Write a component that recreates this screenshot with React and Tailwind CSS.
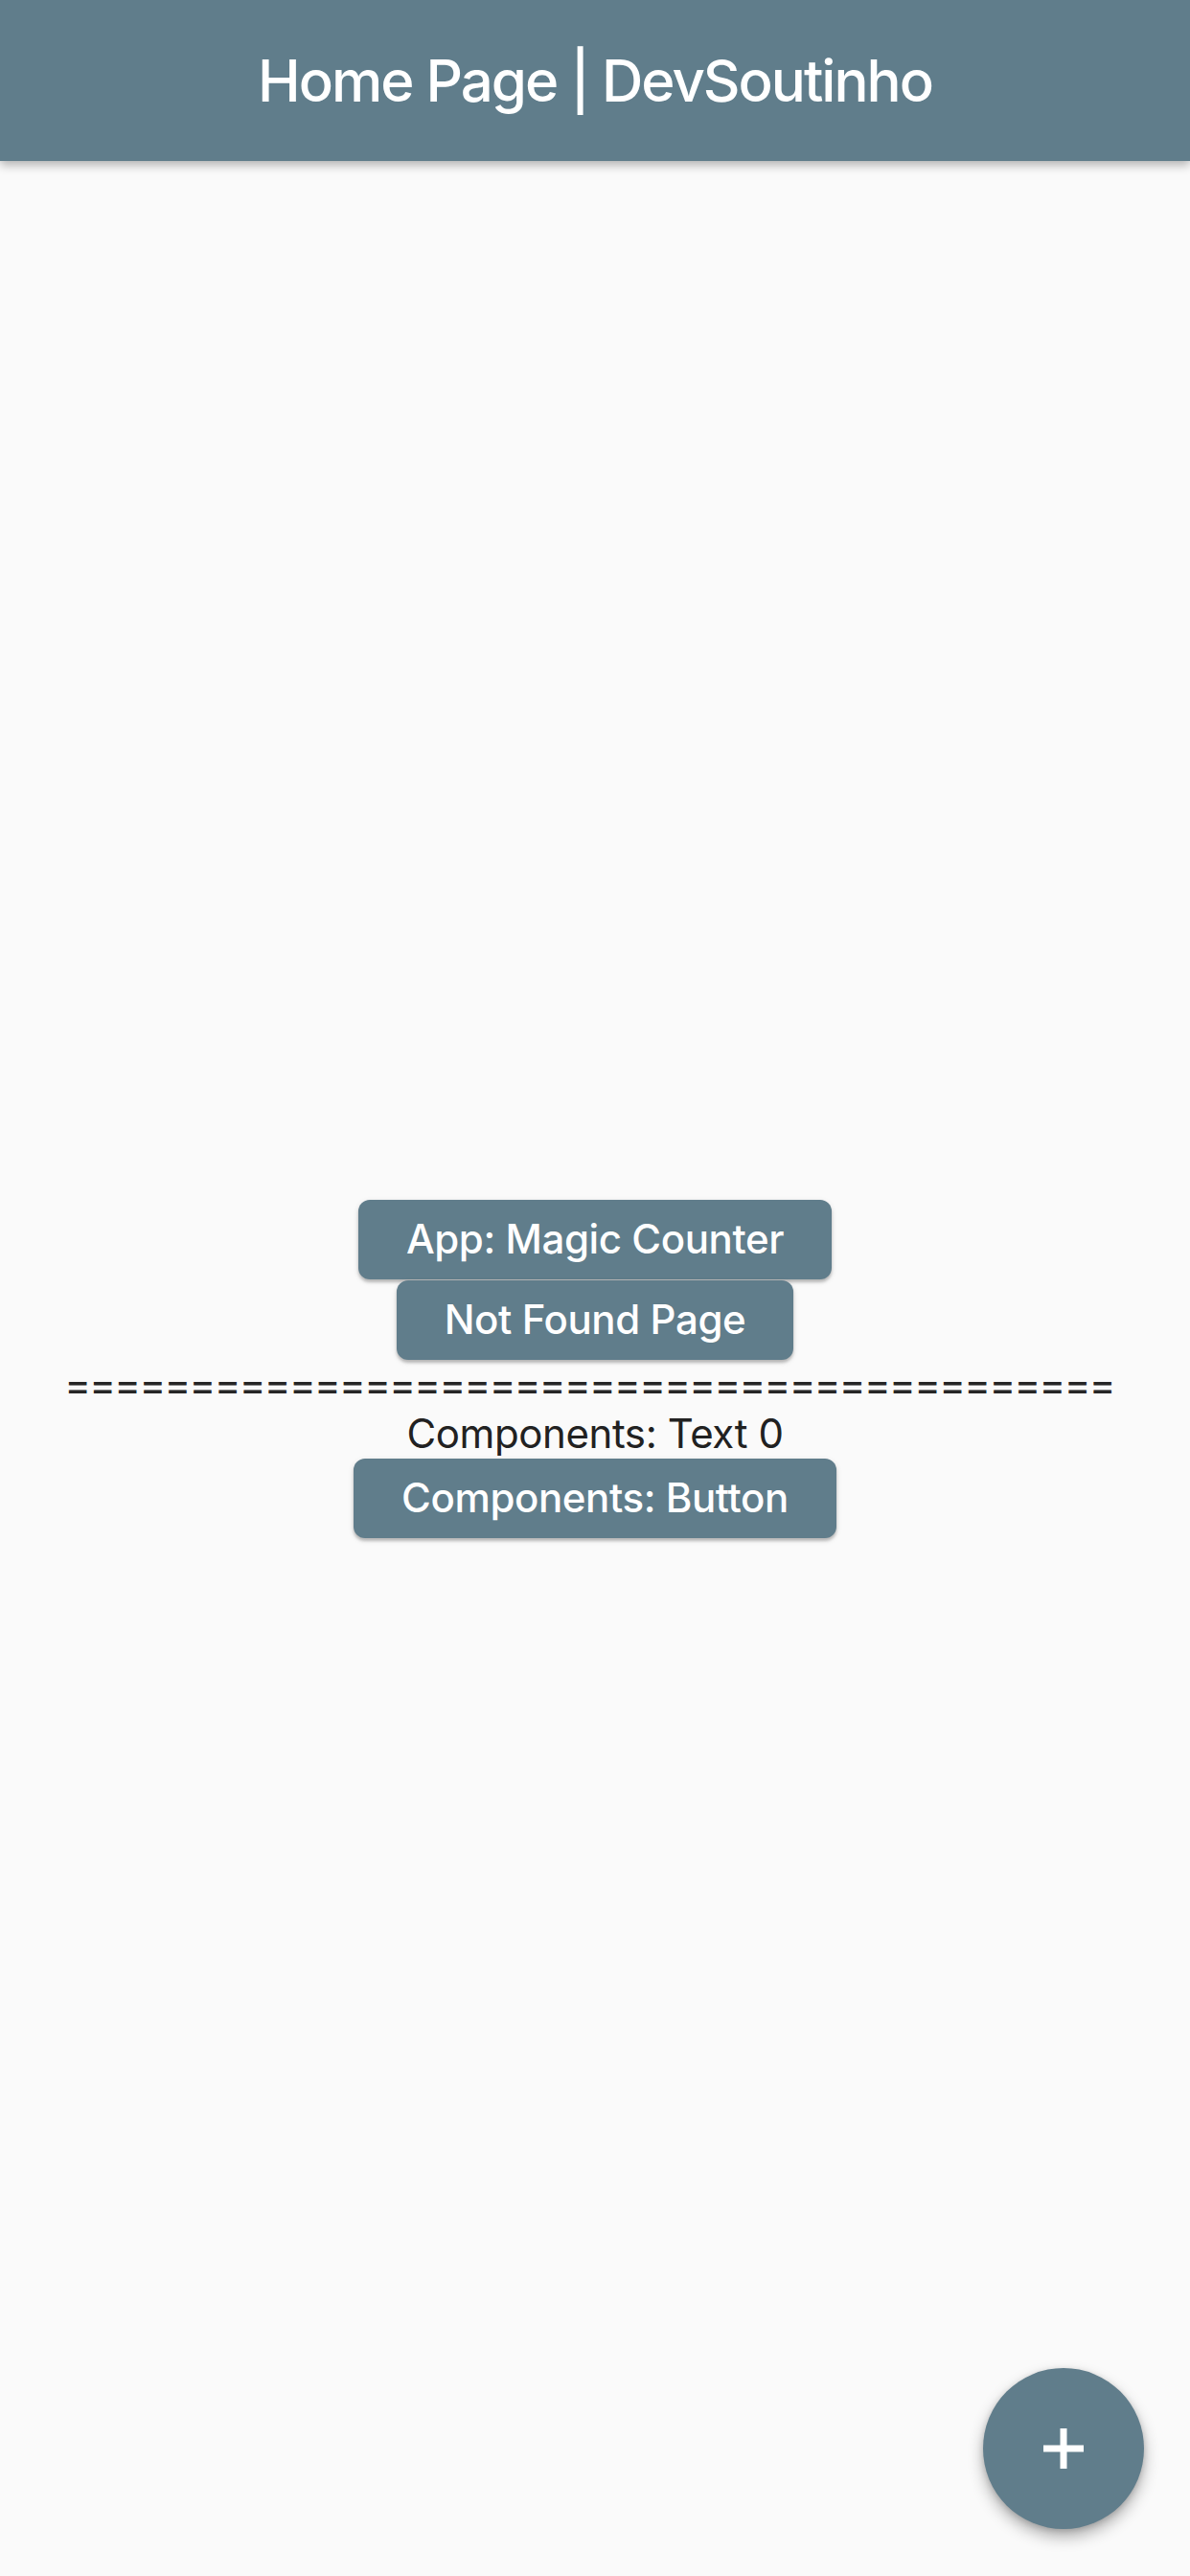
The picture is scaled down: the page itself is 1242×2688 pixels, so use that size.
const Button = ({ label, className = '' }) => (
    <button
        className={`h-[83px] px-[50px] rounded-[12px] bg-[#607d8b] text-white text-[42px] leading-none font-medium tracking-[-0.4px] shadow-[0_3px_3px_rgba(0,0,0,0.2),0_2px_6px_rgba(0,0,0,0.12)] flex items-center justify-center ${className}`}
    >
        {label}
    </button>
);

export default function App() {
    return (
        <div className="relative w-[1242px] h-[2688px] bg-[#fafafa] flex flex-col overflow-hidden font-['Inter','Liberation_Sans',sans-serif]">
            {/* App bar */}
            <header className="h-[168px] shrink-0 bg-[#607d8b] flex items-center justify-center shadow-[0_4px_10px_rgba(0,0,0,0.3)] z-10">
                <h1 className="text-white text-[60px] font-medium leading-none tracking-[-2px]">Home Page | DevSoutinho</h1>
            </header>

            {/* Body */}
            <main className="flex-1 flex flex-col items-center justify-center gap-px text-[#212121] text-[42px]">
                <Button label="App: Magic Counter" />
                <Button label="Not Found Page" />
                <p className="h-[50px] leading-[50px] text-[#262626] tracking-[-1.7px] pr-[12px]">==========================================</p>
                <p className="h-[50px] leading-[50px] tracking-[-0.4px]">Components: Text 0</p>
                <Button label="Components: Button" />
            </main>

            {/* Floating action button */}
            <button className="absolute right-[48px] bottom-[49px] w-[168px] h-[168px] rounded-full bg-[#607d8b] flex items-center justify-center shadow-[0_8px_16px_rgba(0,0,0,0.3),0_2px_6px_rgba(0,0,0,0.15)]">
                <svg width="44" height="44" viewBox="0 0 44 44">
                    <path d="M22 1v42M1 22h42" stroke="white" strokeWidth="7" />
                </svg>
            </button>
        </div>
    );
}
